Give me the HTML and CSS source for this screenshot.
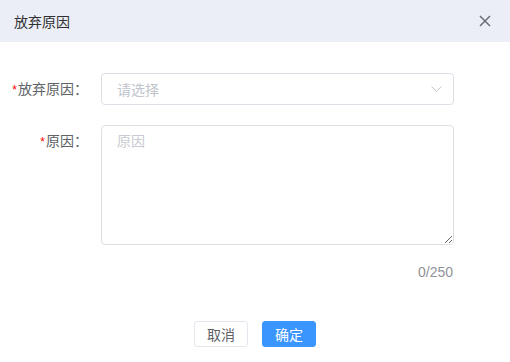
FILE: index.html
```html
<!DOCTYPE html>
<html lang="zh-CN">

<head>
  <meta charset="UTF-8">
  <meta name="viewport" content="width=device-width, initial-scale=1.0">
  <title>放弃原因</title>
  <link rel="stylesheet" href="styles.css">
</head>

<body>
  <div class="dialog">
    <div class="dialog_header">
      <span class="dialog_title">放弃原因</span>
      <button class="close_btn" type="button" aria-label="关闭">
        <svg width="12" height="12" viewBox="0 0 12 12">
          <path d="M1 1 L11 11 M11 1 L1 11" stroke="#6b6d72" stroke-width="1.5" fill="none" />
        </svg>
      </button>
    </div>

    <form class="dialog_body">
      <div class="form_item">
        <label class="form_label"><i class="required">*</i>放弃原因：</label>
        <div class="form_content">
          <div class="select_box">
            <span class="placeholder">请选择</span>
            <svg class="arrow" width="11" height="6" viewBox="0 0 11 6">
              <path d="M0.5 0.5 L5.5 5.2 L10.5 0.5" stroke="#c0c4cc" stroke-width="1" fill="none" />
            </svg>
          </div>
        </div>
      </div>

      <div class="form_item">
        <label class="form_label"><i class="required">*</i>原因：</label>
        <div class="form_content">
          <textarea class="textarea" placeholder="原因" maxlength="250"></textarea>
          <div class="word_count">0/250</div>
        </div>
      </div>
    </form>

    <div class="dialog_footer">
      <button class="btn" type="button">取消</button>
      <button class="btn btn_primary" type="button">确定</button>
    </div>
  </div>
</body>

</html>
```

FILE: styles.css
```css
/* 기본 스타일 */
body {
  margin: 0;
  padding: 0;
  background-color: #fff;
  font-family: "Liberation Sans", "Noto Sans CJK SC", sans-serif;
  font-size: 14px;
  color: #303133;
}

.dialog {
  width: 510px;
  height: 362px;
  background-color: #fff;
}

.dialog_header {
  display: flex;
  justify-content: space-between;
  align-items: center;
  height: 42px;
  padding: 0 14px;
  background-color: #ebeef6;
}

.dialog_title {
  font-size: 14px;
  color: #303133;
}

.close_btn {
  display: flex;
  align-items: center;
  padding: 0;
  margin-right: 5px;
  border: none;
  background: none;
  cursor: pointer;
}

/* 폼 */
.dialog_body {
  padding: 31px 56px 0 0;
}

.form_item {
  display: flex;
  margin-bottom: 20px;
}

.form_label {
  flex: 0 0 101px;
  box-sizing: border-box;
  height: 32px;
  padding-right: 13px;
  line-height: 32px;
  text-align: right;
  color: #606266;
}

.required {
  font-style: normal;
  font-size: 12px;
  line-height: 0;
  color: #f00;
  margin-right: 1px;
}

.form_content {
  flex: 1;
}

.select_box {
  display: flex;
  justify-content: space-between;
  align-items: center;
  box-sizing: border-box;
  height: 32px;
  padding: 0 11px 0 15px;
  border: 1px solid #dcdfe6;
  border-radius: 4px;
}

.placeholder {
  color: #c0c4cc;
}

.textarea {
  display: block;
  box-sizing: border-box;
  width: 100%;
  height: 120px;
  margin: 0;
  padding: 5px 15px;
  border: 1px solid #dcdfe6;
  border-radius: 4px;
  font-family: inherit;
  font-size: 14px;
  line-height: 21px;
  color: #606266;
  resize: vertical;
  outline: none;
}

.textarea::placeholder {
  color: #c8cbd1;
}

.word_count {
  margin-top: 11px;
  padding-right: 1px;
  line-height: 32px;
  text-align: right;
  color: #909399;
}

/* 버튼 */
.dialog_footer {
  display: flex;
  justify-content: center;
  gap: 14px;
  padding-top: 13px;
}

.btn {
  box-sizing: border-box;
  width: 54px;
  height: 26px;
  padding: 0;
  border: 1px solid #e4e7ed;
  border-radius: 3px;
  background-color: #fff;
  font-family: inherit;
  font-size: 14px;
  color: #606266;
  cursor: pointer;
}

.btn_primary {
  background-color: #3a95ff;
  border-color: #3a95ff;
  color: #fff;
}
```
